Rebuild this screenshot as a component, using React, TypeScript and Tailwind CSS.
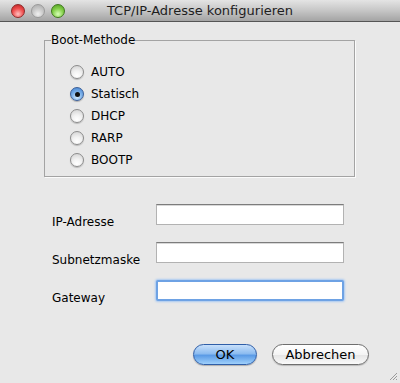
import React from "react";

const font = { fontFamily: '"DejaVu Sans", "Lucida Grande", sans-serif' };

function Radio({ label, checked }: { label: string; checked?: boolean }) {
  return (
    <div className="flex h-[22px] items-center">
      {checked ? (
        <span className="relative flex h-[14px] w-[14px] items-center justify-center rounded-full border border-[#3b5f98] bg-[radial-gradient(circle_at_50%_75%,#d6ecff_0%,#7fb3ea_45%,#3f7fd0_100%)] shadow-[0_1px_1px_rgba(0,0,0,0.25)]">
          <span className="h-[5px] w-[5px] rounded-full bg-[#111]" />
        </span>
      ) : (
        <span className="h-[14px] w-[14px] rounded-full border border-[#8c8c8c] bg-[radial-gradient(circle_at_50%_80%,#ffffff_0%,#f2f2f2_40%,#cfcfcf_100%)] shadow-[0_1px_1px_rgba(0,0,0,0.2)]" />
      )}
      <span className="ml-[7px] text-[12px] leading-[14px] text-black">{label}</span>
    </div>
  );
}

function Field({ label, focused }: { label: string; focused?: boolean }) {
  return (
    <div className="flex h-[21px] items-start">
      <span className="mt-[11px] w-[104px] text-[12px] leading-[14px] text-black">{label}</span>
      {focused ? (
        <div className="h-[21px] w-[188px] rounded-[2px] border-[2px] border-[#6ea2e4] bg-white shadow-[0_0_2px_1px_#a9c9f2]" />
      ) : (
        <div className="h-[21px] w-[188px] border border-[#b2b2b2] border-t-[#7c7c7c] bg-white shadow-[inset_0_1px_0_#d8d8d8]" />
      )}
    </div>
  );
}

export default function App() {
  return (
    <div className="flex h-[383px] w-[400px] flex-col overflow-hidden bg-[#e8e8e8]" style={font}>
      {/* Title bar */}
      <div className="relative flex h-[22px] shrink-0 items-center justify-center border-b border-[#555] bg-gradient-to-b from-[#e4e4e4] via-[#c6c6c6] to-[#a4a4a4]">
        <div className="absolute left-[11px] top-[4px] flex gap-[6px]">
          <span className="h-[14px] w-[14px] rounded-full border border-[#8e2a2a] bg-[radial-gradient(circle_at_50%_75%,#ffc0c0_0%,#f05050_50%,#b81e1e_100%)]" />
          <span className="h-[14px] w-[14px] rounded-full border border-[#9a9a9a] bg-[radial-gradient(circle_at_50%_75%,#f0f0f0_0%,#c8c8c8_50%,#a8a8a8_100%)]" />
          <span className="h-[14px] w-[14px] rounded-full border border-[#3f7a1e] bg-[radial-gradient(circle_at_50%_75%,#d8ffb8_0%,#84d04a_50%,#4f9a1e_100%)]" />
        </div>
        <span className="text-[13px] leading-[16px] text-[#1e1e1e]">TCP/IP-Adresse konfigurieren</span>
      </div>

      {/* Content */}
      <div className="flex flex-1 flex-col pl-[44px]">
        <fieldset className="mt-[11px] w-[311px] border border-[#a3a3a3] px-[6px] pb-[5px] shadow-[1px_1px_0_#fbfbfb]">
          <legend className="px-0 text-[12px] leading-[14px] text-black">Boot-Methode</legend>
          <div className="flex flex-col pl-[19px] pt-[14px]">
            <Radio label="AUTO" />
            <Radio label="Statisch" checked />
            <Radio label="DHCP" />
            <Radio label="RARP" />
            <Radio label="BOOTP" />
          </div>
        </fieldset>

        <div className="mt-[27px] flex flex-col gap-[17px] pl-[8px]">
          <Field label="IP-Adresse" />
          <Field label="Subnetzmaske" />
          <Field label="Gateway" focused />
        </div>

        <div className="mt-[43px] flex justify-end gap-[15px] pr-[31px]">
          <button className="h-[21px] w-[64px] rounded-full border border-[#2f5ea8] bg-[linear-gradient(to_bottom,#c8e0fb_0%,#8dbcf0_45%,#5b9be6_55%,#9fd0fb_100%)] text-[13px] leading-[19px] text-black shadow-[0_1px_1px_rgba(0,0,0,0.25)]">
            OK
          </button>
          <button className="h-[21px] w-[97px] rounded-full border border-[#6e6e6e] bg-[linear-gradient(to_bottom,#ffffff_0%,#f4f4f4_50%,#e6e6e6_55%,#fafafa_100%)] text-[13px] leading-[19px] text-black shadow-[0_1px_1px_rgba(0,0,0,0.2)]">
            Abbrechen
          </button>
        </div>
      </div>

      <div className="relative h-0">
        <svg className="absolute bottom-[2px] right-[2px]" width="10" height="10" viewBox="0 0 10 10">
          <line x1="9" y1="2" x2="2" y2="9" stroke="#9a9a9a" strokeWidth="1" />
          <line x1="9" y1="5" x2="5" y2="9" stroke="#9a9a9a" strokeWidth="1" />
          <line x1="9" y1="8" x2="8" y2="9" stroke="#9a9a9a" strokeWidth="1" />
        </svg>
      </div>
    </div>
  );
}
